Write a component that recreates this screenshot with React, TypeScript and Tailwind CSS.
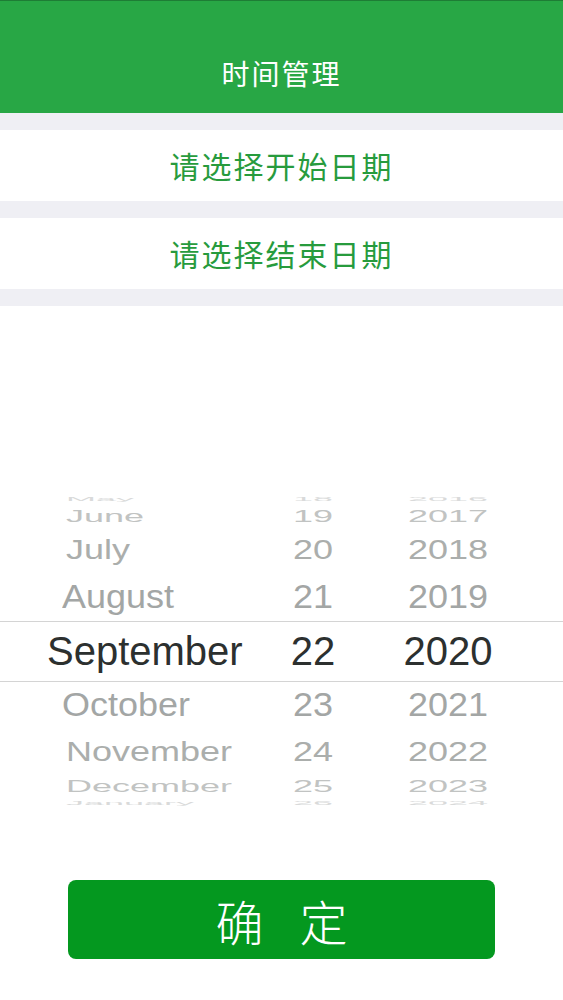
import React from 'react';

const R = 156;
const STEP = (20.6 * Math.PI) / 180;
const OFFSETS = [-4, -3, -2, -1, 0, 1, 2, 3, 4];

const months = ['May', 'June', 'July', 'August', 'September', 'October', 'November', 'December', 'January'];
const days = ['18', '19', '20', '21', '22', '23', '24', '25', '26'];
const years = ['2016', '2017', '2018', '2019', '2020', '2021', '2022', '2023', '2024'];

const fadeColors = ['#2c302f', '#a3a6a5', '#abaeac', '#c1c3c2', '#d9dada'];

function edge(a: number) {
  const clamped = Math.max(-Math.PI / 2, Math.min(Math.PI / 2, a));
  return R * Math.sin(clamped);
}

function rowHeight(k: number) {
  return edge((k + 0.5) * STEP) - edge((k - 0.5) * STEP);
}

function WheelColumn({
  items,
  className,
  align,
}: {
  items: string[];
  className: string;
  align: 'start' | 'center';
}) {
  return (
    <div className={`flex flex-col ${className}`}>
      {OFFSETS.map((k, i) => {
        const selected = k === 0;
        const scale = Math.max(Math.cos(k * STEP), 0.05);
        return (
          <div
            key={items[i]}
            className={`flex items-center ${align === 'center' ? 'justify-center' : 'justify-start'}`}
            style={{ height: rowHeight(k) }}
          >
            <span
              className={`whitespace-nowrap leading-none ${selected ? 'text-[40px]' : 'text-[36px]'} ${
                align === 'start' ? (selected ? '-ml-[15px]' : Math.abs(k) >= 2 ? 'ml-[4px]' : '') : ''
              }`}
              style={{
                transform: `scaleY(${scale})`,
                color: fadeColors[Math.abs(k)],
              }}
            >
              {items[i]}
            </span>
          </div>
        );
      })}
    </div>
  );
}

export default function App() {
  return (
    <div
      className="min-h-screen h-[1000px] bg-white flex flex-col"
      style={{ fontFamily: '"Liberation Sans", "Noto Sans CJK SC", sans-serif' }}
    >
      <div className="h-[113px] bg-[#28a745] border-t border-[#1e7d35] flex items-center justify-center pt-[32px]">
        <span
          className="text-white text-[28px] tracking-[2px] font-normal"
          style={{ fontFamily: '"Noto Sans CJK SC", sans-serif' }}
        >
          时间管理
        </span>
      </div>
      <div className="h-[17px] bg-[#efeff4]" />
      <div className="h-[71px] flex items-center justify-center">
        <span
          className="text-[#279b3d] text-[30px] tracking-[2px]"
          style={{ fontFamily: '"Noto Sans CJK SC", sans-serif' }}
        >
          请选择开始日期
        </span>
      </div>
      <div className="h-[17px] bg-[#efeff4]" />
      <div className="h-[71px] flex items-center justify-center">
        <span
          className="text-[#279b3d] text-[30px] tracking-[2px]"
          style={{ fontFamily: '"Noto Sans CJK SC", sans-serif' }}
        >
          请选择结束日期
        </span>
      </div>
      <div className="h-[17px] bg-[#efeff4]" />

      <div className="relative mt-[189px] h-[312px] overflow-hidden flex">
        <WheelColumn items={months} className="w-[262px] pl-[62px]" align="start" />
        <WheelColumn items={days} className="w-[102px]" align="center" />
        <WheelColumn items={years} className="w-[168px]" align="center" />
        <div className="absolute left-0 right-0 top-[126px] h-px bg-[#d4d4d4]" />
        <div className="absolute left-0 right-0 top-[186px] h-px bg-[#d4d4d4]" />
      </div>

      <div className="mt-[73px] px-[68px]">
        <button className="w-full h-[79px] rounded-lg bg-[#04981f] flex items-center justify-center gap-[36px] text-white text-[48px] font-light">
          <span style={{ fontFamily: '"Noto Sans CJK SC", sans-serif' }}>确</span>
          <span style={{ fontFamily: '"Noto Sans CJK SC", sans-serif' }}>定</span>
        </button>
      </div>
    </div>
  );
}
